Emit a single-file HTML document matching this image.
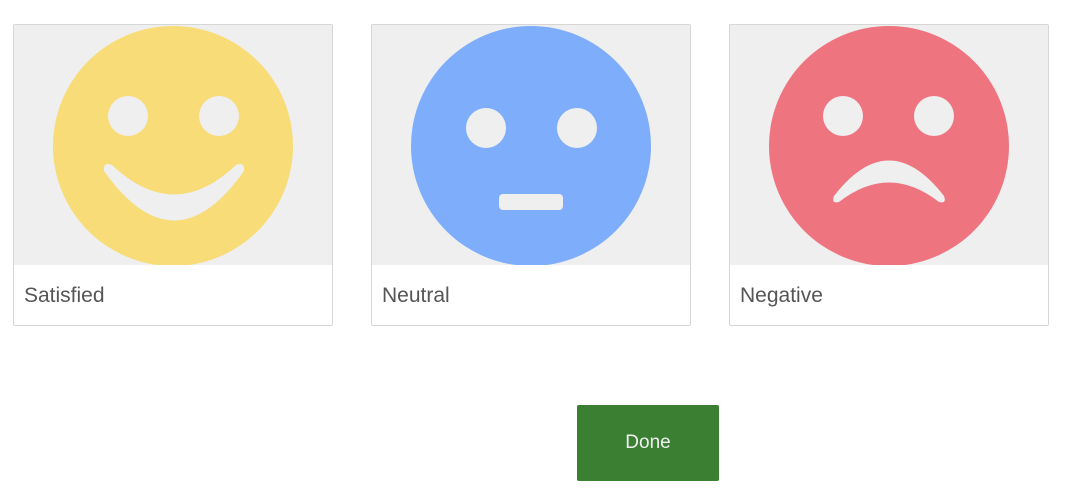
<!DOCTYPE html>
<html><head><meta charset="utf-8"><style>
body{margin:0;width:1068px;height:500px;background:#fff;position:relative;font-family:"Liberation Sans",sans-serif;overflow:hidden}
.card{position:absolute;top:24px;width:318px;height:300px;border:1px solid #d6d6d6;border-radius:2px;background:#fff;overflow:hidden}
.card svg{display:block}
.lbl{position:absolute;left:10px;top:259px;font-size:21px;color:#555}
.btn{position:absolute;left:577px;top:405px;width:142px;height:76px;background:#3b7f33;border-radius:2px;color:#f0f0f0;font-size:19px;display:flex;align-items:center;justify-content:center}
</style></head><body>
<div class="card" style="left:13px">
<svg width="318" height="240" viewBox="0 0 318 240"><rect width="318" height="240" fill="#efefef"/>
<circle cx="159" cy="121" r="120" fill="#f8dc77"/>
<circle cx="114" cy="91" r="20" fill="#efefef"/><circle cx="205" cy="91" r="20" fill="#efefef"/>
<path d="M90,146 Q160,245 230,146 Q231,136 222,140 Q160,199 98,140 Q89,136 90,146 Z" fill="#efefef"/>
</svg><div class="lbl">Satisfied</div></div>
<div class="card" style="left:371px">
<svg width="318" height="240" viewBox="0 0 318 240"><rect width="318" height="240" fill="#efefef"/>
<circle cx="159" cy="121" r="120" fill="#7eaefb"/>
<circle cx="114" cy="103" r="20" fill="#efefef"/><circle cx="205" cy="103" r="20" fill="#efefef"/>
<rect x="127" y="169" width="64" height="16" rx="4" fill="#efefef"/>
</svg><div class="lbl">Neutral</div></div>
<div class="card" style="left:729px">
<svg width="318" height="240" viewBox="0 0 318 240"><rect width="318" height="240" fill="#efefef"/>
<circle cx="159" cy="121" r="120" fill="#ee7480"/>
<circle cx="113" cy="91" r="20" fill="#efefef"/><circle cx="204" cy="91" r="20" fill="#efefef"/>
<path d="M104,171 Q159,100 214,171 Q217,179 209,177 Q159,138 109,177 Q101,179 104,171 Z" fill="#efefef"/>
</svg><div class="lbl">Negative</div></div>
<div class="btn">Done</div>
</body></html>
